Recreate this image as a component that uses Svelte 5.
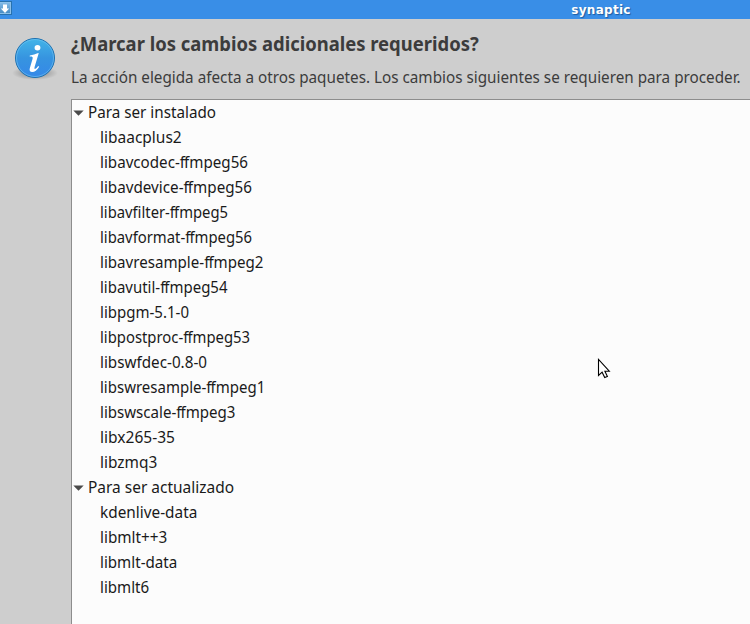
<script>
  const groups = [
    {
      name: 'Para ser instalado',
      width: 128,
      packages: [
        ['libaacplus2', 81.7], ['libavcodec-ffmpeg56', 148], ['libavdevice-ffmpeg56', 152],
        ['libavfilter-ffmpeg5', 128], ['libavformat-ffmpeg56', 152], ['libavresample-ffmpeg2', 163.5],
        ['libavutil-ffmpeg54', 127.5], ['libpgm-5.1-0', 89], ['libpostproc-ffmpeg53', 150],
        ['libswfdec-0.8-0', 107], ['libswresample-ffmpeg1', 165.3], ['libswscale-ffmpeg3', 135.5],
        ['libx265-35', 75], ['libzmq3', 57.2]
      ]
    },
    {
      name: 'Para ser actualizado',
      width: 146,
      packages: [['kdenlive-data', 97.3], ['libmlt++3', 67.3], ['libmlt-data', 77.3], ['libmlt6', 49.2]]
    }
  ];

  // Condenses a label horizontally to its given advance width.
  function fit(node, width) {
    node.style.transform = `scaleX(${width / node.getBoundingClientRect().width})`;
  }
</script>

<div class="window">
  <header class="titlebar">
    <svg class="app-icon" width="12" height="15" viewBox="0 0 12 15">
      <defs>
        <linearGradient id="tile" x2="0" y2="1"><stop stop-color="#80b8e5" /><stop offset="1" stop-color="#488dc5" /></linearGradient>
      </defs>
      <rect x="-3" y="1" width="15" height="14" fill="#2872af" />
      <rect x="-2" y="2" width="13" height="12" fill="#8cc0e9" />
      <rect x="-1" y="3" width="11" height="10" fill="url(#tile)" />
      <path d="M3 4.500h4v4h2.200L5 13 .8 8.500H3z" fill="#fff" />
    </svg>
    <span class="caption">synaptic</span>
  </header>
  <main>
    <svg class="info" width="48" height="48" viewBox="0 0 48 48">
      <defs>
        <radialGradient id="shadow"><stop stop-color="#000" stop-opacity=".4" /><stop offset="1" stop-color="#000" stop-opacity="0" /></radialGradient>
        <linearGradient id="ball" x2="0" y2="1"><stop stop-color="#43b5e8" /><stop offset=".5" stop-color="#3694e0" /><stop offset="1" stop-color="#3588e8" /></linearGradient>
      </defs>
      <ellipse cx="24" cy="38" rx="23" ry="7" fill="url(#shadow)" />
      <circle cx="24" cy="23" r="19.500" fill="url(#ball)" stroke="#1d70b0" />
      <circle cx="24" cy="23" r="18.500" fill="none" stroke="#75c4f4" stroke-opacity=".6" />
      <ellipse cx="26.500" cy="12.700" rx="2.900" ry="2.700" fill="#fff" />
      <path d="M18.800 20.400q4.500-.6 8.400-2.500l.5.400-4.100 13.600q-.6 2.100.4 2.100 1.200 0 3.200-3l1 .7q-3.200 5.300-7 5.300-3.400 0-2.400-3.700l2.800-9.500q.6-2-1-2.200l-1.900-.1z" fill="#fff" />
    </svg>
    <section class="content">
      <h1><span use:fit={407.7}>¿Marcar los cambios adicionales requeridos?</span></h1>
      <p><span use:fit={669.6}>La acción elegida afecta a otros paquetes. Los cambios siguientes se requieren para proceder.</span></p>
      <div class="tree">
        {#each groups as group}
          <div class="row group">
            <svg width="11" height="6" viewBox="0 0 11 6"><path d="M.3.500h10.400L5.500 5.700z" fill="#4a4a4a" /></svg>
            <span use:fit={group.width}>{group.name}</span>
          </div>
          {#each group.packages as [name, width]}
            {@const parts = name.split('ffmpeg')}
            <div class="row package">
              <span use:fit={width}>{parts[0]}{#if parts.length > 1}<b>f</b>fmpeg{parts[1]}{/if}</span>
            </div>
          {/each}
        {/each}
      </div>
    </section>
  </main>
  <svg class="pointer" width="14" height="22" viewBox="0 0 14 22">
    <path d="M1.500 1.500v16l3.600-3.300 2.600 5.400 2.700-1.200-2.500-5.200h4.400z" fill="#fff" stroke="#000" stroke-width="1.100" />
  </svg>
</div>

<style>
  .window {
    position: relative;
    width: 750px;
    height: 624px;
    overflow: hidden;
    display: flex;
    flex-direction: column;
    background: #cecece;
    color: #3c3c3c;
    font-family: 'Noto Sans', 'Open Sans', sans-serif;
    font-size: 16px;
  }
  .titlebar {
    display: flex;
    flex: none;
    height: 19px;
    background: #398ee7;
  }
  .app-icon { flex: none; }
  .caption {
    width: 1178px;
    flex: none;
    text-align: center;
    color: #fff;
    font: bold 12px/20px 'DejaVu Sans', sans-serif;
    letter-spacing: .3px;
    text-shadow: 1px 1px 1px #1e5c9e;
  }
  main { display: flex; flex: 1; }
  .info { flex: none; margin: 16px 12px 0 11px; }
  .content { flex: 1; min-width: 0; display: flex; flex-direction: column; }
  h1, p { margin: 0; white-space: nowrap; }
  h1 { margin-top: 11px; font-size: 19.200px; line-height: 28px; height: 28px; }
  p { margin-top: 7px; line-height: 24px; height: 24px; }
  h1 span, p span, .row span {
    display: inline-block;
    flex: none;
    transform-origin: left;
    white-space: nowrap;
  }
  .row b { font-weight: inherit; letter-spacing: -1px; }
  .tree {
    flex: 1;
    margin-top: 10px;
    border: solid #8d8d8d;
    border-width: 1px 0 0 1px;
    background: #fcfcfc;
    color: #1a1a1a;
  }
  .row { display: flex; align-items: center; height: 25px; line-height: 25px; }
  .group { padding-left: 1px; gap: 3.500px; }
  .package { padding-left: 27.600px; }
  .pointer { position: absolute; left: 597px; top: 358px; }
</style>
